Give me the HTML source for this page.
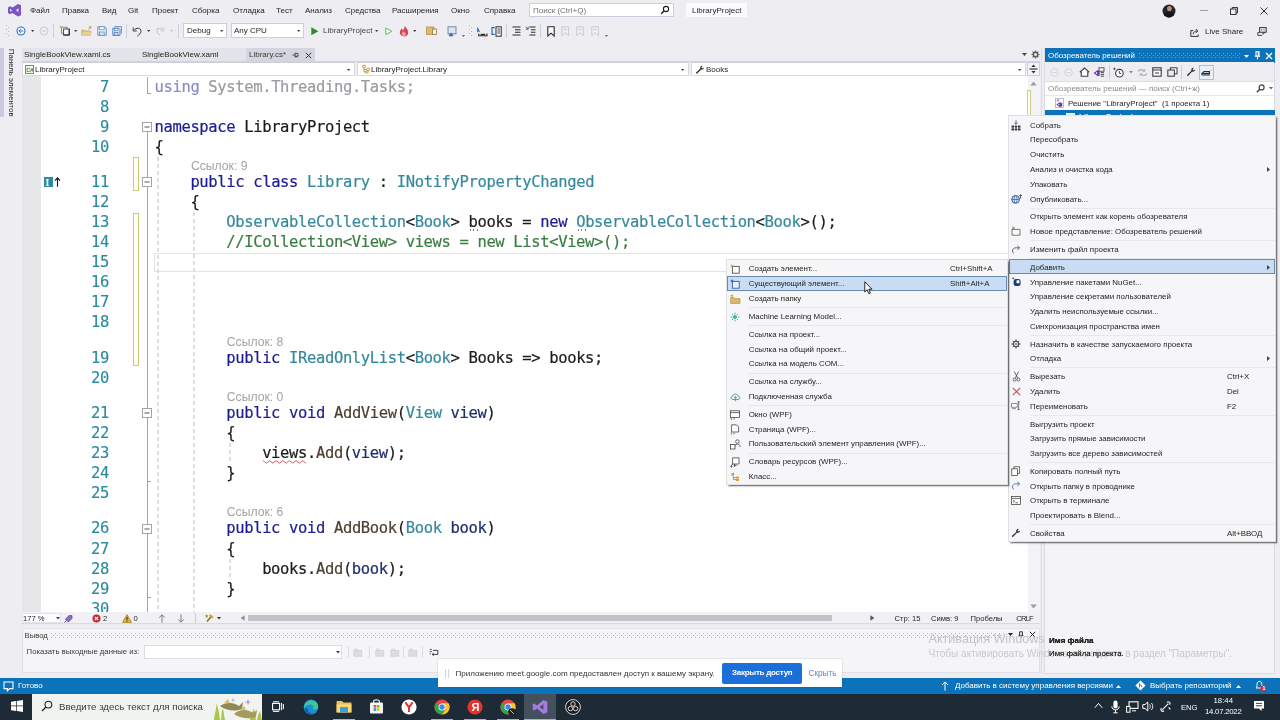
<!DOCTYPE html>
<html lang="ru"><head><meta charset="utf-8"><title>LibraryProject - Microsoft Visual Studio</title>
<style>
html,body{margin:0;padding:0}
body{width:1280px;height:720px;overflow:hidden;position:relative;background:#EEEEF2;font-family:"Liberation Sans",sans-serif;font-size:8px;color:#1E1E1E}
#root{position:absolute;left:0;top:0;width:1280px;height:720px;overflow:hidden;background:#EEEEF2;filter:blur(0.3px)}
.a{position:absolute;box-sizing:border-box}
.t{position:absolute;white-space:pre}
.c{position:absolute;white-space:pre;font-family:"DejaVu Sans Mono","Liberation Mono",monospace;font-size:15.5px;line-height:20px;color:#1b1b1b;letter-spacing:-0.361px;-webkit-text-stroke:0.2px currentColor}
.k{color:#1C1C94}.ty{color:#36899A}.cm{color:#3A7D40}.g{color:#9a9aa0}.m{color:#4C4230}.p{color:#1F2F6E}
.ln{position:absolute;white-space:pre;font-family:"DejaVu Sans Mono","Liberation Mono",monospace;font-size:15.5px;line-height:20px;color:#2B8A9E;text-align:right;width:40px;letter-spacing:-0.361px;-webkit-text-stroke:0.15px currentColor}
.cl{position:absolute;white-space:pre;font-size:12.2px;line-height:14px;color:#A3A3A3}

.gd{position:absolute;width:2px;background:repeating-linear-gradient(to bottom,#DEDEDE 0,#DEDEDE 4.4px,transparent 4.4px,transparent 7px)}

</style></head>
<body>
<div id="root">
<svg class="a" style="left:7.8px;top:4.2px;" width="13.6" height="12.5" viewBox="0 0 13.6 12.5"><path d="M10 0 L13.6 1.6 V10.9 L10 12.5 L4.5 8.9 L2 10.2 L0 9 V3.5 L2 2.3 L4.5 3.6 Z M10.4 4.3 L8 6.25 L10.4 8.2 Z M2.1 4.7 V7.8 L4.1 6.25 Z" fill="#7C56C4" fill-rule="evenodd"/></svg>
<span class="t" style="left:30px;top:4.5px;font-size:8px;line-height:12px;color:#1E1E1E;">Файл</span>
<span class="t" style="left:62px;top:4.5px;font-size:8px;line-height:12px;color:#1E1E1E;">Правка</span>
<span class="t" style="left:102px;top:4.5px;font-size:8px;line-height:12px;color:#1E1E1E;">Вид</span>
<span class="t" style="left:128px;top:4.5px;font-size:8px;line-height:12px;color:#1E1E1E;">Git</span>
<span class="t" style="left:152px;top:4.5px;font-size:8px;line-height:12px;color:#1E1E1E;">Проект</span>
<span class="t" style="left:192px;top:4.5px;font-size:8px;line-height:12px;color:#1E1E1E;">Сборка</span>
<span class="t" style="left:233px;top:4.5px;font-size:8px;line-height:12px;color:#1E1E1E;">Отладка</span>
<span class="t" style="left:276px;top:4.5px;font-size:8px;line-height:12px;color:#1E1E1E;">Тест</span>
<span class="t" style="left:305px;top:4.5px;font-size:8px;line-height:12px;color:#1E1E1E;">Анализ</span>
<span class="t" style="left:345px;top:4.5px;font-size:8px;line-height:12px;color:#1E1E1E;">Средства</span>
<span class="t" style="left:392px;top:4.5px;font-size:8px;line-height:12px;color:#1E1E1E;">Расширения</span>
<span class="t" style="left:451px;top:4.5px;font-size:8px;line-height:12px;color:#1E1E1E;">Окно</span>
<span class="t" style="left:484px;top:4.5px;font-size:8px;line-height:12px;color:#1E1E1E;">Справка</span>
<div class="a" style="left:529px;top:3px;width:145px;height:14px;background:#FFFFFF;border:1px solid #CCCEDB;"></div>
<span class="t" style="left:533px;top:4.5px;font-size:8px;line-height:12px;color:#717171;">Поиск (Ctrl+Q)</span>
<svg class="a" style="left:660px;top:5px;" width="10" height="10" viewBox="0 0 10 10"><circle cx="6" cy="4" r="2.6" fill="none" stroke="#1E1E1E" stroke-width="1.1"/><path d="M4.2 5.8 L1.2 8.8" stroke="#1E1E1E" stroke-width="1.4"/></svg>
<div class="a" style="left:686px;top:3px;width:61px;height:14px;background:#FBFBFD;"></div>
<span class="t" style="left:692px;top:4.5px;font-size:8px;line-height:12px;color:#1E1E1E;">LibraryProject</span>
<svg class="a" style="left:1162px;top:4px;" width="14" height="14" viewBox="0 0 14 14"><defs><clipPath id="av"><circle cx="7" cy="7" r="6.5"/></clipPath></defs><g clip-path="url(#av)"><rect width="14" height="14" fill="#23252B"/><ellipse cx="7.4" cy="4.6" rx="2.4" ry="2.6" fill="#B98E77"/><path d="M0 14 Q1 8 7 8.2 Q13 8 14 14 Z" fill="#15161A"/></g></svg>
<div class="a" style="left:1200px;top:10px;width:8px;height:1px;background:#A0A0A0;"></div>
<svg class="a" style="left:1229px;top:6px;" width="10" height="10" viewBox="0 0 10 10"><rect x="1.5" y="3" width="5.5" height="5.5" fill="none" stroke="#333" stroke-width="1"/><path d="M3.2 3 V1.5 H8.5 V6.8 H7" fill="none" stroke="#333" stroke-width="1"/></svg>
<svg class="a" style="left:1259px;top:6px;" width="10" height="10" viewBox="0 0 10 10"><path d="M1.5 1.5 L8.5 8.5 M8.5 1.5 L1.5 8.5" stroke="#333" stroke-width="1"/></svg>
<svg class="a" style="left:6px;top:24px;" width="4" height="14" viewBox="0 0 4 14"><g fill="#B9BAC6"><rect x="0" y="1" width="1" height="1"/><rect x="2" y="3" width="1" height="1"/><rect x="0" y="5" width="1" height="1"/><rect x="2" y="7" width="1" height="1"/><rect x="0" y="9" width="1" height="1"/><rect x="2" y="11" width="1" height="1"/></g></svg>
<svg class="a" style="left:16px;top:25.5px;" width="10" height="10" viewBox="0 0 10 10"><circle cx="5" cy="5" r="4" fill="#F4F8FD" stroke="#2F6FC2" stroke-width="1.1"/><path d="M7.3 5 H3 M4.8 3.1 L2.9 5 L4.8 6.9" fill="none" stroke="#2F6FC2" stroke-width="1"/></svg>
<svg class="a" style="left:31.099999999999998px;top:30.0px;" width="3.4" height="2" viewBox="0 0 3.4 2"><path d="M0 0 H3.4 L1.7 2 Z" fill="#444"/></svg>
<svg class="a" style="left:38.5px;top:25.5px;" width="10" height="10" viewBox="0 0 10 10"><circle cx="5" cy="5" r="4" fill="none" stroke="#C8C9D2" stroke-width="1"/><path d="M2.7 5 H7" stroke="#C8C9D2" stroke-width="1"/></svg>
<div class="a" style="left:53px;top:24px;width:1px;height:14px;background:#CCCEDB;"></div>
<svg class="a" style="left:59px;top:25px;" width="12" height="11" viewBox="0 0 12 11"><rect x="2.6" y="2.2" width="5.4" height="6" fill="#F7F7FA" stroke="#6A6A72" stroke-width="0.8"/><rect x="4.6" y="4" width="5.6" height="6" fill="#FBFBFD" stroke="#3A3A40" stroke-width="0.9"/><path d="M4.6 10 H10.2 V4" fill="none" stroke="#1E1E1E" stroke-width="1"/><path d="M1.8 0.2 L2.4 1.4 L3.6 1.8 L2.4 2.3 L1.8 3.6 L1.2 2.3 L0 1.8 L1.2 1.4 Z" fill="#D9B24A"/></svg>
<svg class="a" style="left:74.3px;top:30.0px;" width="3.4" height="2" viewBox="0 0 3.4 2"><path d="M0 0 H3.4 L1.7 2 Z" fill="#444"/></svg>
<svg class="a" style="left:80.5px;top:25.5px;" width="12" height="10" viewBox="0 0 12 10"><path d="M0.6 4 H3.6 L4.6 5 H9.6 V9.2 H0.6 Z" fill="#DCC27E" stroke="#C2A55C" stroke-width="0.6"/><path d="M0.6 9.2 L2.2 6 H11 L9.6 9.2 Z" fill="#E6D093"/><path d="M7.2 3.4 L9.8 0.8 M9.8 0.8 H8 M9.8 0.8 V2.6" stroke="#B09045" stroke-width="0.9" fill="none"/></svg>
<svg class="a" style="left:96.5px;top:25.5px;" width="10" height="10" viewBox="0 0 10 10"><path d="M0.8 0.8 H7.8 L9.2 2.2 V9.2 H0.8 Z" fill="#EEF3FA" stroke="#5B86BC" stroke-width="0.9"/><rect x="2.6" y="0.8" width="4.6" height="3" fill="#FBFCFE" stroke="#5B86BC" stroke-width="0.7"/><rect x="2.6" y="6" width="4.6" height="3.2" fill="#DCE7F5" stroke="#5B86BC" stroke-width="0.7"/></svg>
<svg class="a" style="left:111.5px;top:25.5px;" width="10" height="10" viewBox="0 0 10 10"><path d="M2.4 0.6 H9.4 V7.4" fill="none" stroke="#5B86BC" stroke-width="0.9"/><path d="M0.8 2.2 H6.8 L8 3.4 V9.4 H0.8 Z" fill="#E4ECF7" stroke="#4E79B0" stroke-width="0.9"/><rect x="2.4" y="2.4" width="3.6" height="2.4" fill="#FBFCFE" stroke="#4E79B0" stroke-width="0.7"/><rect x="2.4" y="6.6" width="3.6" height="2.8" fill="#CCDAEE" stroke="#4E79B0" stroke-width="0.7"/></svg>
<div class="a" style="left:126px;top:24px;width:1px;height:14px;background:#CCCEDB;"></div>
<svg class="a" style="left:131.5px;top:25.5px;" width="11" height="11" viewBox="0 0 11 11"><path d="M1.8 4.4 C4 1.2 9.4 1.6 9 5.4 C8.8 7.4 7.2 8.6 5.4 10" fill="none" stroke="#333" stroke-width="1"/><path d="M1.2 1.4 V5 H4.8" fill="none" stroke="#333" stroke-width="0.9"/></svg>
<svg class="a" style="left:146.8px;top:30.0px;" width="3.4" height="2" viewBox="0 0 3.4 2"><path d="M0 0 H3.4 L1.7 2 Z" fill="#444"/></svg>
<svg class="a" style="left:155px;top:25.5px;" width="10" height="10" viewBox="0 0 10 10"><path d="M8.4 4.2 C6.4 1.4 1.6 1.8 2 5.2 C2.2 6.8 3.4 7.8 4.8 9" fill="none" stroke="#C9CAD3" stroke-width="1.1"/><path d="M9 1.2 V4.8 H5.4" fill="none" stroke="#C9CAD3" stroke-width="1"/></svg>
<svg class="a" style="left:170.3px;top:30.0px;" width="3.4" height="2" viewBox="0 0 3.4 2"><path d="M0 0 H3.4 L1.7 2 Z" fill="#C4C5CD"/></svg>
<div class="a" style="left:178px;top:24px;width:1px;height:14px;background:#CCCEDB;"></div>
<div class="a" style="left:183px;top:23px;width:44px;height:15px;background:#FFFFFF;border:1px solid #CCCEDB;"></div>
<span class="t" style="left:187px;top:24.5px;font-size:8px;line-height:12px;color:#1E1E1E;">Debug</span>
<svg class="a" style="left:220.3px;top:30.0px;" width="3.4" height="2" viewBox="0 0 3.4 2"><path d="M0 0 H3.4 L1.7 2 Z" fill="#444"/></svg>
<div class="a" style="left:231px;top:23px;width:73px;height:15px;background:#FFFFFF;border:1px solid #CCCEDB;"></div>
<span class="t" style="left:234px;top:24.5px;font-size:8px;line-height:12px;color:#1E1E1E;">Any CPU</span>
<svg class="a" style="left:297.3px;top:30.0px;" width="3.4" height="2" viewBox="0 0 3.4 2"><path d="M0 0 H3.4 L1.7 2 Z" fill="#444"/></svg>
<svg class="a" style="left:310.5px;top:26.5px;" width="8" height="9" viewBox="0 0 8 9"><path d="M0.3 0.3 L7.4 4.3 L0.3 8.3 Z" fill="#2E8B2E"/></svg>
<span class="t" style="left:323px;top:24.5px;font-size:8px;line-height:12px;color:#444;">LibraryProject</span>
<svg class="a" style="left:375.3px;top:30.0px;" width="3.4" height="2" viewBox="0 0 3.4 2"><path d="M0 0 H3.4 L1.7 2 Z" fill="#444"/></svg>
<svg class="a" style="left:384.5px;top:26.5px;" width="8" height="9" viewBox="0 0 8 9"><path d="M0.8 0.9 L6.8 4.3 L0.8 7.7 Z" fill="#F4FBF2" stroke="#6DB56A" stroke-width="1"/></svg>
<svg class="a" style="left:399px;top:25px;" width="10" height="12" viewBox="0 0 10 12"><path d="M5.6 0.6 C6.4 2.8 9.2 4.2 9.2 7.4 C9.2 9.8 7.4 11.4 5 11.4 C2.6 11.4 0.8 9.8 0.8 7.6 C0.8 5.6 2.2 4.8 2.6 3.2 C3.6 4 3.8 5 3.8 5.6 C5 4.6 5.8 2.6 5.6 0.6 Z" fill="#D8435A"/><path d="M5 11 C3.6 11 2.8 10 2.8 8.8 C2.8 7.6 3.8 7.2 4.2 6.2 C5.4 7 6.8 7.8 6.8 9.2 C6.8 10.2 6 11 5 11 Z" fill="#F39CA7"/></svg>
<svg class="a" style="left:412.8px;top:30.0px;" width="3.4" height="2" viewBox="0 0 3.4 2"><path d="M0 0 H3.4 L1.7 2 Z" fill="#444"/></svg>
<svg class="a" style="left:426px;top:25.5px;" width="11" height="10" viewBox="0 0 11 10"><rect x="0.5" y="1" width="7.5" height="7.5" fill="#DDB871" stroke="#B8924A" stroke-width="0.8"/><rect x="6.5" y="3" width="4" height="5.5" fill="#F6F0E0" stroke="#8A7A55" stroke-width="0.8"/></svg>
<svg class="a" style="left:446.5px;top:25.5px;" width="10" height="11" viewBox="0 0 10 11"><rect x="1" y="0.8" width="8" height="7" fill="#DCE6F2" stroke="#6A7C96" stroke-width="0.9"/><path d="M1.4 10 L4 6.6 L6.6 10 Z" fill="#3D73B9"/><rect x="2.6" y="8.4" width="2.8" height="2" fill="#3D73B9"/></svg>
<svg class="a" style="left:461.5px;top:34.5px;" width="3" height="2" viewBox="0 0 3 2"><path d="M0 0 H3 L1.5 2 Z" fill="#666"/></svg>
<svg class="a" style="left:469px;top:24px;" width="4" height="14" viewBox="0 0 4 14"><g fill="#B9BAC6"><rect x="0" y="1" width="1" height="1"/><rect x="2" y="3" width="1" height="1"/><rect x="0" y="5" width="1" height="1"/><rect x="2" y="7" width="1" height="1"/><rect x="0" y="9" width="1" height="1"/><rect x="2" y="11" width="1" height="1"/></g></svg>
<svg class="a" style="left:476px;top:25.5px;" width="12" height="11" viewBox="0 0 12 11"><path d="M1.2 0.6 V6.6 L2.8 5.2 L4.4 6.4 Z" fill="#1F5FB4"/><path d="M2.8 7.4 V9.8 H11 V7.4" fill="none" stroke="#2B2B2B" stroke-width="1.1"/><rect x="4.6" y="7.8" width="4.6" height="1.6" fill="#2B2B2B"/></svg>
<svg class="a" style="left:491px;top:25.5px;" width="11" height="11" viewBox="0 0 11 11"><path d="M3.6 1.6 H1 V8.4 H3.6" fill="none" stroke="#1F5FB4" stroke-width="1.1"/><rect x="5" y="0.8" width="5.2" height="9.4" fill="#fff" stroke="#2B2B2B" stroke-width="1"/><path d="M6.4 3 H9 M6.4 5 H9 M6.4 7 H9" stroke="#2B2B2B" stroke-width="0.9"/></svg>
<div class="a" style="left:505.5px;top:24px;width:1px;height:14px;background:#CCCEDB;"></div>
<svg class="a" style="left:512px;top:26px;" width="9" height="10" viewBox="0 0 9 10"><path d="M0.5 1 H8.5 M3 3.7 H8.5 M3 6.3 H8.5 M0.5 9 H8.5" stroke="#2B2B2B" stroke-width="1.1"/></svg>
<svg class="a" style="left:524.5px;top:26px;" width="11" height="10" viewBox="0 0 11 10"><path d="M4.4 1 H10.5 M6 3.7 H10.5 M6 6.3 H10.5 M4.4 9 H10.5" stroke="#2B2B2B" stroke-width="1.1"/><path d="M0.6 0.8 L3.2 3.2 M0.8 3.2 H3.2 V0.9" stroke="#1F5FB4" stroke-width="0.9" fill="none"/></svg>
<div class="a" style="left:540px;top:24px;width:1px;height:14px;background:#CCCEDB;"></div>
<svg class="a" style="left:546.5px;top:25.5px;" width="8" height="11" viewBox="0 0 8 11"><path d="M0.8 0.8 H7.2 V10 L4 7.2 L0.8 10 Z" fill="#FCFCFD" stroke="#2B2B2B" stroke-width="1.1"/></svg>
<svg class="a" style="left:560.5px;top:25.5px;" width="9" height="11" viewBox="0 0 9 11"><path d="M0.8 0.8 H7.6 V9.6 L4.2 7 L0.8 9.6 Z" fill="none" stroke="#C9CAD3" stroke-width="1"/><path d="M2.4 3.4 H6" stroke="#C9CAD3" stroke-width="0.9"/></svg>
<svg class="a" style="left:576px;top:25.5px;" width="9" height="11" viewBox="0 0 9 11"><path d="M0.8 0.8 H7.6 V9.6 L4.2 7 L0.8 9.6 Z" fill="none" stroke="#C9CAD3" stroke-width="1"/><path d="M2.4 3.4 H6" stroke="#C9CAD3" stroke-width="0.9"/></svg>
<svg class="a" style="left:590.5px;top:25.5px;" width="9" height="11" viewBox="0 0 9 11"><path d="M0.8 0.8 H7.6 V9.6 L4.2 7 L0.8 9.6 Z" fill="none" stroke="#C9CAD3" stroke-width="1"/><path d="M2.4 3.4 H6" stroke="#C9CAD3" stroke-width="0.9"/></svg>
<svg class="a" style="left:605.0px;top:34.5px;" width="3" height="2" viewBox="0 0 3 2"><path d="M0 0 H3 L1.5 2 Z" fill="#666"/></svg>
<svg class="a" style="left:1190px;top:28px;" width="10" height="9" viewBox="0 0 10 9"><path d="M3.2 2.6 H0.8 V8.4 H8.2 V6.4" fill="none" stroke="#333" stroke-width="1"/><path d="M3 6.2 C3.4 4 5 3 7.2 3 M5.8 1 L7.8 3 L5.8 5" fill="none" stroke="#333" stroke-width="1"/></svg>
<span class="t" style="left:1205px;top:26px;font-size:8px;line-height:12px;color:#1E1E1E;">Live Share</span>
<svg class="a" style="left:1257px;top:27px;" width="10" height="9" viewBox="0 0 10 9"><path d="M2.6 5.6 H0.8 V8.4 H5" fill="none" stroke="#333" stroke-width="0.9"/><rect x="2.6" y="0.6" width="6.6" height="4.6" fill="none" stroke="#333" stroke-width="1"/><path d="M6 5.2 V7.4 L8 5.2" fill="none" stroke="#333" stroke-width="0.9"/><circle cx="4.6" cy="2.8" r="0.6" fill="#333"/><circle cx="7" cy="2.8" r="0.6" fill="#333"/></svg>
<div class="a" style="left:0px;top:48px;width:3.5px;height:68.5px;background:#CBC8E0;"></div>
<span class="t" style="left:7px;top:49px;font-size:7.8px;line-height:9px;color:#1E1E1E;transform-origin:0 0;transform:translate(9.3px,0) rotate(90deg);">Панель элементов</span>
<div class="a" style="left:22px;top:48px;width:224px;height:13.5px;background:#E3E4E9;"></div>
<div class="a" style="left:245.5px;top:48px;width:69.5px;height:13.5px;background:#D4D5DD;"></div>
<div class="a" style="left:22px;top:61px;width:1018px;height:1px;background:#D2D3DC;"></div>
<span class="t" style="left:24px;top:48.5px;font-size:8px;line-height:12px;color:#1E1E1E;">SingleBookView.xaml.cs</span>
<span class="t" style="left:142px;top:48.5px;font-size:8px;line-height:12px;color:#1E1E1E;">SingleBookView.xaml</span>
<span class="t" style="left:249px;top:48.5px;font-size:8px;line-height:12px;color:#3A3A3A;">Library.cs*</span>
<svg class="a" style="left:292px;top:51.5px;" width="7" height="6" viewBox="0 0 7 6"><path d="M0.4 3 H3 M3 0.8 V5.2 M3 1.4 H6 V4.2 H3 M3 4.8 H6" fill="none" stroke="#444" stroke-width="0.9"/></svg>
<svg class="a" style="left:304.5px;top:51.5px;" width="7" height="7" viewBox="0 0 7 7"><path d="M0.8 0.8 L6.2 6.2 M6.2 0.8 L0.8 6.2" stroke="#333" stroke-width="1"/></svg>
<svg class="a" style="left:1021.5px;top:53.0px;" width="5" height="3" viewBox="0 0 5 3"><path d="M0 0 H5 L2.5 3 Z" fill="#444"/></svg>
<svg class="a" style="left:1030.5px;top:49.5px;" width="9" height="9" viewBox="0 0 9 9"><circle cx="4.5" cy="4.5" r="2.2" fill="none" stroke="#555" stroke-width="1.4"/><g stroke="#555" stroke-width="1.2"><path d="M4.5 0.4 V1.8 M4.5 7.2 V8.6 M0.4 4.5 H1.8 M7.2 4.5 H8.6 M1.6 1.6 L2.6 2.6 M6.4 6.4 L7.4 7.4 M1.6 7.4 L2.6 6.4 M6.4 2.6 L7.4 1.6"/></g></svg>
<div class="a" style="left:22px;top:62px;width:1018px;height:14px;background:#EEEEF2;"></div>
<div class="a" style="left:22px;top:62px;width:333px;height:14px;background:#FFFFFF;border:1px solid #D6D8E2;border-top-color:#CCCEDB;"></div>
<svg class="a" style="left:347.3px;top:68.8px;" width="3.4" height="2" viewBox="0 0 3.4 2"><path d="M0 0 H3.4 L1.7 2 Z" fill="#444"/></svg>
<div class="a" style="left:357px;top:62px;width:332px;height:14px;background:#FFFFFF;border:1px solid #D6D8E2;border-top-color:#CCCEDB;"></div>
<svg class="a" style="left:681.3px;top:68.8px;" width="3.4" height="2" viewBox="0 0 3.4 2"><path d="M0 0 H3.4 L1.7 2 Z" fill="#444"/></svg>
<div class="a" style="left:691px;top:62px;width:335px;height:14px;background:#FFFFFF;border:1px solid #D6D8E2;border-top-color:#CCCEDB;"></div>
<svg class="a" style="left:1018.3px;top:68.8px;" width="3.4" height="2" viewBox="0 0 3.4 2"><path d="M0 0 H3.4 L1.7 2 Z" fill="#444"/></svg>
<svg class="a" style="left:25px;top:64.5px;" width="9" height="9" viewBox="0 0 9 9"><rect x="0.5" y="0.5" width="8" height="8" fill="#F4FAF0" stroke="#5E8F4C" stroke-width="0.9"/><text x="1.2" y="6.8" font-family="Liberation Sans,sans-serif" font-size="5.6" font-weight="bold" fill="#3E7A2E">C#</text></svg>
<span class="t" style="left:35px;top:63.5px;font-size:8px;line-height:12px;color:#1E1E1E;">LibraryProject</span>
<svg class="a" style="left:359.5px;top:64px;" width="11" height="10" viewBox="0 0 11 10"><path d="M2 2.4 L4 0.8 L6 2.4 L4 4 Z" fill="#F6E7B6" stroke="#B98D26" stroke-width="0.8"/><path d="M6 5.4 L8 3.8 L10 5.4 L8 7 Z M5 8 L7 6.6 L8.6 8 L7 9.4 Z" fill="#F6E7B6" stroke="#B98D26" stroke-width="0.8"/><path d="M4 4 V8 H5 M4 5.4 H6" fill="none" stroke="#777" stroke-width="0.7"/></svg>
<span class="t" style="left:371px;top:63.5px;font-size:8px;line-height:12px;color:#1E1E1E;">LibraryProject.Library</span>
<svg class="a" style="left:695px;top:64.5px;" width="10" height="10" viewBox="0 0 10 10"><path d="M9 2.6 C9 4.2 7.4 5 6.2 4.5 L2.2 8.6 C1.6 9.2 0.6 8.3 1.2 7.6 L5.3 3.6 C4.8 2.2 6 0.6 7.6 0.9 L6.4 2.2 L6.9 3 L7.8 3.4 Z" fill="#2B2B2B"/></svg>
<span class="t" style="left:706px;top:63.5px;font-size:8px;line-height:12px;color:#1E1E1E;">Books</span>
<div class="a" style="left:1027px;top:62px;width:13px;height:14px;background:#F4F4F7;border:1px solid #CCCEDB;"></div>
<svg class="a" style="left:1029px;top:64px;" width="9" height="10" viewBox="0 0 9 10"><path d="M0.5 5 H8.5" stroke="#333" stroke-width="1.2"/><path d="M4.5 0.6 L6.6 3 H2.4 Z M4.5 9.4 L6.6 7 H2.4 Z" fill="#333"/></svg>
<div class="a" style="left:22px;top:76px;width:1018px;height:536px;background:#FFFFFF;"></div>
<div class="a" style="left:22px;top:76px;width:19px;height:536px;background:#E6E7E8;"></div>
<div class="a" style="left:1027.5px;top:76px;width:12.5px;height:536px;background:#F3F3F6;"></div>
<svg class="a" style="left:1030px;top:81px;" width="7" height="5" viewBox="0 0 7 5"><path d="M0.3 4.6 L3.5 0.6 L6.7 4.6 Z" fill="#9C9DA6"/></svg>
<svg class="a" style="left:1030px;top:603.5px;" width="7" height="5" viewBox="0 0 7 5"><path d="M0.3 0.4 L3.5 4.4 L6.7 0.4 Z" fill="#9C9DA6"/></svg>
<div class="a" style="left:1027px;top:90px;width:4px;height:150px;background:#FFFFF2;border:1px solid #CFCF86;"></div>
<div class="a" style="left:154px;top:252.5px;width:872px;height:19px;border:1px solid #E3E3E6;border-right:none;"></div>
<div class="gd" style="left:157.3px;top:156.9px;height:455.1px;"></div>
<div class="gd" style="left:193.3px;top:212.1px;height:399.9px;"></div>
<div class="gd" style="left:229.3px;top:443.1px;height:20.1px;"></div>
<div class="gd" style="left:229.3px;top:558.6px;height:20.1px;"></div>
<div class="a" style="left:147px;top:76.5px;width:1px;height:16.08px;background:#A5A5A5;"></div>
<div class="a" style="left:147px;top:92.58px;width:4px;height:1px;background:#A5A5A5;"></div>
<div class="a" style="left:147px;top:131.66px;width:1px;height:480.34000000000003px;background:#A5A5A5;"></div>
<div class="a" style="left:147px;top:481.23999999999984px;width:4px;height:1px;background:#A5A5A5;"></div>
<div class="a" style="left:147px;top:596.74px;width:4px;height:1px;background:#A5A5A5;"></div>
<svg class="a" style="left:142px;top:122px;" width="10" height="10" viewBox="0 0 10 10"><rect x="0.5" y="0.5" width="9" height="9" fill="#fff" stroke="#A5A5A5"/><path d="M2.5 5 H7.5" stroke="#555" stroke-width="1"/></svg>
<svg class="a" style="left:142px;top:177px;" width="10" height="10" viewBox="0 0 10 10"><rect x="0.5" y="0.5" width="9" height="9" fill="#fff" stroke="#A5A5A5"/><path d="M2.5 5 H7.5" stroke="#555" stroke-width="1"/></svg>
<svg class="a" style="left:142px;top:408px;" width="10" height="10" viewBox="0 0 10 10"><rect x="0.5" y="0.5" width="9" height="9" fill="#fff" stroke="#A5A5A5"/><path d="M2.5 5 H7.5" stroke="#555" stroke-width="1"/></svg>
<svg class="a" style="left:142px;top:524px;" width="10" height="10" viewBox="0 0 10 10"><rect x="0.5" y="0.5" width="9" height="9" fill="#fff" stroke="#A5A5A5"/><path d="M2.5 5 H7.5" stroke="#555" stroke-width="1"/></svg>
<div class="a" style="left:133px;top:157.42px;width:6px;height:33.58000000000001px;background:#FFFFF4;border:1px solid #C9C978;"></div>
<div class="a" style="left:133px;top:212.57999999999998px;width:6px;height:153.6599999999999px;background:#FFFFF4;border:1px solid #C9C978;"></div>
<span class="ln" style="left:69px;top:76.50px;">7</span>
<span class="ln" style="left:69px;top:96.58px;">8</span>
<span class="ln" style="left:69px;top:116.66px;">9</span>
<span class="ln" style="left:69px;top:136.74px;">10</span>
<span class="ln" style="left:69px;top:171.92px;">11</span>
<span class="ln" style="left:69px;top:192.00px;">12</span>
<span class="ln" style="left:69px;top:212.08px;">13</span>
<span class="ln" style="left:69px;top:232.16px;">14</span>
<span class="ln" style="left:69px;top:252.24px;">15</span>
<span class="ln" style="left:69px;top:272.32px;">16</span>
<span class="ln" style="left:69px;top:292.40px;">17</span>
<span class="ln" style="left:69px;top:312.48px;">18</span>
<span class="ln" style="left:69px;top:347.66px;">19</span>
<span class="ln" style="left:69px;top:367.74px;">20</span>
<span class="ln" style="left:69px;top:402.92px;">21</span>
<span class="ln" style="left:69px;top:423.00px;">22</span>
<span class="ln" style="left:69px;top:443.08px;">23</span>
<span class="ln" style="left:69px;top:463.16px;">24</span>
<span class="ln" style="left:69px;top:483.24px;">25</span>
<span class="ln" style="left:69px;top:518.42px;">26</span>
<span class="ln" style="left:69px;top:538.50px;">27</span>
<span class="ln" style="left:69px;top:558.58px;">28</span>
<span class="ln" style="left:69px;top:578.66px;">29</span>
<span class="ln" style="left:69px;top:598.74px;">30</span>
<span class="c" style="left:154.50px;top:76.50px;"><span style="color:#8C8CC8">using</span> <span class="g">System.Threading.Tasks;</span></span>
<span class="c" style="left:154.50px;top:116.66px;"><span class="k">namespace</span> LibraryProject</span>
<span class="c" style="left:154.50px;top:136.74px;">{</span>
<span class="c" style="left:190.38px;top:171.92px;"><span class="k">public</span> <span class="k">class</span> <span class="ty">Library</span> : <span class="ty">INotifyPropertyChanged</span></span>
<span class="c" style="left:190.38px;top:192.00px;">{</span>
<span class="c" style="left:226.26px;top:212.08px;"><span class="ty">ObservableCollection</span>&lt;<span class="ty">Book</span>&gt; books = <span class="k">new</span> <span class="ty">ObservableCollection</span>&lt;<span class="ty">Book</span>&gt;();</span>
<span class="c" style="left:226.26px;top:232.16px;"><span class="cm">//ICollection&lt;View&gt; views = new List&lt;View&gt;();</span></span>
<span class="c" style="left:226.26px;top:347.66px;"><span class="k">public</span> <span class="ty">IReadOnlyList</span>&lt;<span class="ty">Book</span>&gt; Books =&gt; books;</span>
<span class="c" style="left:226.26px;top:402.92px;"><span class="k">public</span> <span class="k">void</span> <span class="m">AddView</span>(<span class="ty">View</span> <span class="p">view</span>)</span>
<span class="c" style="left:226.26px;top:423.00px;">{</span>
<span class="c" style="left:262.14px;top:443.08px;">views.<span class="m">Add</span>(<span class="p">view</span>);</span>
<span class="c" style="left:226.26px;top:463.16px;">}</span>
<span class="c" style="left:226.26px;top:518.42px;"><span class="k">public</span> <span class="k">void</span> <span class="m">AddBook</span>(<span class="ty">Book</span> <span class="p">book</span>)</span>
<span class="c" style="left:226.26px;top:538.50px;">{</span>
<span class="c" style="left:262.14px;top:558.58px;">books.<span class="m">Add</span>(<span class="p">book</span>);</span>
<span class="c" style="left:226.26px;top:578.66px;">}</span>
<span class="cl" style="left:190.88px;top:158.92px;">Ссылок: 9</span>
<span class="cl" style="left:226.76px;top:334.66px;">Ссылок: 8</span>
<span class="cl" style="left:226.76px;top:389.92px;">Ссылок: 0</span>
<span class="cl" style="left:226.76px;top:505.42px;">Ссылок: 6</span>
<svg class="a" style="left:263px;top:459.5px;" width="44" height="4" viewBox="0 0 44 4"><path d="M0.00 0.6 L3.30 3.2 L6.60 0.6 L9.90 3.2 L13.20 0.6 L16.50 3.2 L19.80 0.6 L23.10 3.2 L26.40 0.6 L29.70 3.2 L33.00 0.6 L36.30 3.2 L39.60 0.6 L42.90 3.2" fill="none" stroke="#D2555F" stroke-width="0.95" stroke-linejoin="round"/></svg>
<div class="a" style="left:469.5px;top:229.38px;width:1.4px;height:1.4px;background:#7E7E7E;"></div>
<div class="a" style="left:473.1px;top:229.38px;width:1.4px;height:1.4px;background:#7E7E7E;"></div>
<div class="a" style="left:476.7px;top:229.38px;width:1.4px;height:1.4px;background:#7E7E7E;"></div>
<div class="a" style="left:577.5px;top:229.38px;width:1.4px;height:1.4px;background:#7E7E7E;"></div>
<div class="a" style="left:581.1px;top:229.38px;width:1.4px;height:1.4px;background:#7E7E7E;"></div>
<div class="a" style="left:584.7px;top:229.38px;width:1.4px;height:1.4px;background:#7E7E7E;"></div>
<div class="a" style="left:44px;top:177px;width:9px;height:10px;background:#2B8A9E;"></div>
<span class="t" style="left:45.5px;top:176.5px;font-family:'Liberation Serif',serif;font-weight:bold;font-size:10px;line-height:11px;color:#fff;">I</span>
<svg class="a" style="left:54px;top:177px;" width="7" height="10" viewBox="0 0 7 10"><path d="M3.5 9.8 V1 M1 3.6 L3.5 0.8 L6 3.6" fill="none" stroke="#111" stroke-width="1.1"/></svg>
<div class="a" style="left:22px;top:612px;width:1018px;height:12px;background:#EEEEF2;"></div>
<div class="a" style="left:1041px;top:48px;width:1px;height:626px;background:#DCDDE4;"></div>
<div class="a" style="left:1044px;top:48px;width:231px;height:626px;background:#F4F4F6;border:1px solid #DADBE2;"></div>
<div class="a" style="left:1044.5px;top:48.4px;width:230.5px;height:14.4px;background:#0C72B9;"></div>
<span class="t" style="left:1048px;top:50.2px;font-size:7.9px;line-height:12px;color:#FFFFFF;">Обозреватель решений</span>
<svg class="a" style="left:1139px;top:53px;" width="101" height="6" viewBox="0 0 101 6"><defs><pattern id="dg" width="4" height="4" patternUnits="userSpaceOnUse"><rect x="0" y="0" width="1" height="1" fill="#5FA4DA"/><rect x="2" y="2" width="1" height="1" fill="#5FA4DA"/></pattern></defs><rect width="101" height="6" fill="url(#dg)"/></svg>
<svg class="a" style="left:1243.5px;top:54.5px;" width="5" height="3" viewBox="0 0 5 3"><path d="M0 0 H5 L2.5 3 Z" fill="#FFFFFF"/></svg>
<svg class="a" style="left:1253.5px;top:51px;" width="7" height="9" viewBox="0 0 7 9"><path d="M2 0.8 H5 V5 H2 Z M0.8 5.2 H6.2 M3.5 5.2 V8.6" fill="none" stroke="#fff" stroke-width="1.1"/><path d="M4.4 0.8 V5" stroke="#fff" stroke-width="1.2"/></svg>
<svg class="a" style="left:1264.5px;top:52px;" width="8" height="8" viewBox="0 0 8 8"><path d="M1 1 L7 7 M7 1 L1 7" stroke="#fff" stroke-width="1.3"/></svg>
<div class="a" style="left:1045px;top:62px;width:229px;height:19px;background:#EEEEF2;"></div>
<svg class="a" style="left:1049.5px;top:67.5px;" width="9" height="9" viewBox="0 0 9 9"><circle cx="4.5" cy="4.5" r="3.8" fill="none" stroke="#D2D3DB" stroke-width="1"/><path d="M2.4 4.5 H6.6" stroke="#D2D3DB" stroke-width="1"/></svg>
<svg class="a" style="left:1064px;top:67.5px;" width="9" height="9" viewBox="0 0 9 9"><circle cx="4.5" cy="4.5" r="3.8" fill="none" stroke="#D2D3DB" stroke-width="1"/><path d="M2.4 4.5 H6.6" stroke="#D2D3DB" stroke-width="1"/></svg>
<svg class="a" style="left:1078.5px;top:67px;" width="11" height="10" viewBox="0 0 11 10"><path d="M0.8 5.2 L5.5 1 L10.2 5.2 M2.2 4.4 V9.2 H8.8 V4.4" fill="#fff" stroke="#3B3B3B" stroke-width="1.1"/></svg>
<svg class="a" style="left:1092.5px;top:66.5px;" width="12" height="11" viewBox="0 0 12 11"><path d="M0.6 6 L4.2 3.4 V4.8 L2.4 6 L4.2 7.4 V8.8 Z M4.2 3 L6.6 4 V8.4 L4.2 9.2 Z" fill="#6A2FB0"/><rect x="6" y="0.8" width="5" height="3.4" fill="#fff" stroke="#444" stroke-width="0.9"/><path d="M7.6 5.6 H11 M7.6 7.4 H11 M7.6 9.2 H11" stroke="#444" stroke-width="0.9"/></svg>
<div class="a" style="left:1108.5px;top:65px;width:1px;height:14px;background:#CCCEDB;"></div>
<svg class="a" style="left:1113px;top:66.5px;" width="12" height="11" viewBox="0 0 12 11"><circle cx="6.4" cy="6.2" r="3.8" fill="#fff" stroke="#3B3B3B" stroke-width="1.1"/><path d="M6.4 4 V6.4 H8.2" fill="none" stroke="#3B3B3B" stroke-width="0.9"/><path d="M1.4 0.6 V3 M0.2 1.8 H2.6" stroke="#3B3B3B" stroke-width="0.8"/></svg>
<svg class="a" style="left:1128.5px;top:71.25px;" width="4" height="2.5" viewBox="0 0 4 2.5"><path d="M0 0 H4 L2.0 2.5 Z" fill="#888"/></svg>
<svg class="a" style="left:1136.5px;top:68px;" width="11" height="9" viewBox="0 0 11 9"><path d="M1 3.4 C2.6 1 6 1 7.4 3 M10 5.6 C8.4 8 5 8 3.6 6" fill="none" stroke="#A9AAB3" stroke-width="1.2"/><path d="M7.8 1 V3.4 H5.6 M3.2 8 V5.6 H5.4" fill="none" stroke="#A9AAB3" stroke-width="0.9"/></svg>
<svg class="a" style="left:1151.5px;top:67px;" width="10" height="10" viewBox="0 0 10 10"><rect x="0.8" y="0.8" width="8.4" height="8.4" fill="#fff" stroke="#3B3B3B" stroke-width="1.1"/><path d="M0.8 3 H9.2 M3 6 H7" stroke="#3B3B3B" stroke-width="1"/></svg>
<svg class="a" style="left:1166.5px;top:67px;" width="11" height="10" viewBox="0 0 11 10"><rect x="3.4" y="0.8" width="6.6" height="6" fill="#fff" stroke="#3B3B3B" stroke-width="1"/><rect x="0.8" y="3" width="6.6" height="6.2" fill="#E9E9EE" stroke="#3B3B3B" stroke-width="1"/></svg>
<div class="a" style="left:1181px;top:65px;width:1px;height:14px;background:#CCCEDB;"></div>
<svg class="a" style="left:1186px;top:67px;" width="10" height="10" viewBox="0 0 10 10"><path d="M9.2 2.6 C9.2 4.3 7.5 5.2 6.2 4.6 L2.2 8.8 C1.5 9.5 0.5 8.5 1.2 7.8 L5.4 3.8 C4.8 2.3 6 0.6 7.8 0.9 L6.5 2.2 L7 3.1 L7.9 3.5 Z" fill="#2B2B2B"/></svg>
<div class="a" style="left:1198.5px;top:64.5px;width:15.5px;height:15.5px;background:#E6F0FA;border:1px solid #9CC4E6;"></div>
<svg class="a" style="left:1201px;top:68px;" width="11" height="8" viewBox="0 0 11 8"><path d="M1 5.6 H8.4 V3.6 H3 Z" fill="#fff" stroke="#2B2B2B" stroke-width="1.1"/><path d="M0.6 7 H9" stroke="#2B2B2B" stroke-width="1"/><path d="M9.4 2.6 L10.6 1.4" stroke="#C9A227" stroke-width="0.9"/></svg>
<div class="a" style="left:1045px;top:81px;width:229px;height:14.5px;background:#FFFFFF;border-top:1px solid #DCDDE4;border-bottom:1px solid #E6E7EC;"></div>
<span class="t" style="left:1048px;top:82.5px;font-size:8px;line-height:12px;color:#8A8A8A;letter-spacing:0.02px;">Обозреватель решений — поиск (Ctrl+ж)</span>
<svg class="a" style="left:1256px;top:84px;" width="9" height="9" viewBox="0 0 9 9"><circle cx="5.6" cy="3.4" r="2.5" fill="none" stroke="#444" stroke-width="1.2"/><path d="M3.8 5.2 L0.8 8.2" stroke="#444" stroke-width="1.5"/></svg>
<svg class="a" style="left:1268.5px;top:87.25px;" width="4" height="2.5" viewBox="0 0 4 2.5"><path d="M0 0 H4 L2.0 2.5 Z" fill="#666"/></svg>
<div class="a" style="left:1045px;top:95.5px;width:229px;height:20px;background:#FFFFFF;"></div>
<svg class="a" style="left:1055px;top:98px;" width="9" height="10" viewBox="0 0 9 10"><rect x="0.6" y="0.6" width="7.8" height="8.8" fill="#fff" stroke="#A0A0A8" stroke-width="0.7"/><path d="M1.4 6.6 L4.4 4.4 V5.6 L3 6.6 L4.4 7.6 V8.8 Z M4.4 4.2 L7.2 5 V8.4 L4.4 9 Z" fill="#6A2FB0"/><path d="M2 1.4 L4 3.4 M4 1.4 L2 3.4" stroke="#6A2FB0" stroke-width="0.8"/></svg>
<span class="t" style="left:1068px;top:97.6px;font-size:7.9px;line-height:12px;color:#1E1E1E;">Решение "LibraryProject"  (1 проекта 1)</span>
<div class="a" style="left:1045px;top:109.5px;width:230px;height:14.5px;background:#0C72B9;overflow:hidden;"><span class="t" style="left:34px;top:1.5px;font-size:8px;line-height:12px;color:#fff;font-weight:bold;">LibraryProject</span><svg class="a" style="left:9px;top:5px" width="5" height="5" viewBox="0 0 5 5"><path d="M5 0 V5 H0 Z" fill="#fff"/></svg><svg class="a" style="left:21px;top:3px" width="9" height="9" viewBox="0 0 9 9"><rect x="0.5" y="0.5" width="8" height="8" fill="#E9F4E4" stroke="#fff" stroke-width="0.8"/></svg></div>
<span class="t" style="left:1049px;top:635px;font-size:8px;line-height:12px;color:#1E1E1E;font-weight:bold;">Имя файла</span>
<span class="t" style="left:1049px;top:647.5px;font-size:7.85px;line-height:12px;color:#1E1E1E;">Имя файла проекта.</span>
<div class="a" style="left:22px;top:612px;width:1018px;height:12px;background:#F1F1F5;"></div>
<div class="a" style="left:22px;top:623px;width:1018px;height:1px;background:#D9DAE1;"></div>
<div class="a" style="left:21.5px;top:612.5px;width:39.5px;height:10.5px;background:#FCFCFD;border:1px solid #E2E3EA;"></div>
<span class="t" style="left:23px;top:612.5px;font-size:7.6px;line-height:11px;color:#1E1E1E;">177 %</span>
<svg class="a" style="left:55.5px;top:617.25px;" width="4" height="2.5" viewBox="0 0 4 2.5"><path d="M0 0 H4 L2.0 2.5 Z" fill="#444"/></svg>
<svg class="a" style="left:63.5px;top:613.5px;" width="9" height="9" viewBox="0 0 9 9"><path d="M1.4 5.2 L5 1.6 H8 V4.4 L4.4 8 Z" fill="#8A6FC0" stroke="#5B3F9A" stroke-width="0.7"/><path d="M0.6 8.4 L2.6 6.4" stroke="#5B3F9A" stroke-width="1"/></svg>
<svg class="a" style="left:91.5px;top:613.5px;" width="9" height="9" viewBox="0 0 9 9"><circle cx="4.5" cy="4.5" r="4" fill="#C9282D"/><path d="M2.8 2.8 L6.2 6.2 M6.2 2.8 L2.8 6.2" stroke="#fff" stroke-width="1.1"/></svg>
<span class="t" style="left:103px;top:612.5px;font-size:7.6px;line-height:11px;color:#1E1E1E;">2</span>
<svg class="a" style="left:121.5px;top:613.5px;" width="10" height="9" viewBox="0 0 10 9"><path d="M5 0.6 L9.6 8.4 H0.4 Z" fill="#E2B33C" stroke="#8A6A10" stroke-width="0.6"/><path d="M5 3 V6" stroke="#1E1E1E" stroke-width="1"/><rect x="4.5" y="6.7" width="1" height="1" fill="#1E1E1E"/></svg>
<span class="t" style="left:133.5px;top:612.5px;font-size:7.6px;line-height:11px;color:#1E1E1E;">0</span>
<svg class="a" style="left:158px;top:613.5px;" width="8" height="9" viewBox="0 0 8 9"><path d="M4 8.6 V1 M1.2 3.6 L4 0.8 L6.8 3.6" fill="none" stroke="#555" stroke-width="0.75"/></svg>
<svg class="a" style="left:177px;top:613.5px;" width="8" height="9" viewBox="0 0 8 9"><path d="M4 0.4 V8 M1.2 5.4 L4 8.2 L6.8 5.4" fill="none" stroke="#555" stroke-width="0.75"/></svg>
<div class="a" style="left:195px;top:613px;width:1px;height:10px;background:#CCCEDB;"></div>
<svg class="a" style="left:205px;top:613px;" width="10" height="10" viewBox="0 0 10 10"><path d="M2 8.6 L6.6 3" stroke="#8A6A2A" stroke-width="1.5"/><path d="M5.4 1.2 L8.6 4 L7 5.4 L4.2 2.8 Z" fill="#C9A227"/><path d="M1.6 1 L2.2 2.4 L3.6 2.6 L2.4 3.4 L2.8 4.8 L1.6 4 L0.6 4.8 L0.9 3.4 L0 2.6 L1.2 2.4 Z" fill="#6A8F3A"/></svg>
<svg class="a" style="left:216.5px;top:617.25px;" width="4" height="2.5" viewBox="0 0 4 2.5"><path d="M0 0 H4 L2.0 2.5 Z" fill="#333"/></svg>
<svg class="a" style="left:240px;top:615px;" width="5" height="6" viewBox="0 0 5 6"><path d="M4.6 0.2 V5.8 L0.6 3 Z" fill="#8E8F98"/></svg>
<div class="a" style="left:248px;top:615px;width:584px;height:5.5px;background:#C2C3C9;"></div>
<svg class="a" style="left:870px;top:615px;" width="5" height="6" viewBox="0 0 5 6"><path d="M0.4 0.2 V5.8 L4.4 3 Z" fill="#55565E"/></svg>
<span class="t" style="left:894.5px;top:612.5px;font-size:7.6px;line-height:11px;color:#1E1E1E;">Стр: 15</span>
<span class="t" style="left:931px;top:612.5px;font-size:7.6px;line-height:11px;color:#1E1E1E;">Симв: 9</span>
<span class="t" style="left:970.5px;top:612.5px;font-size:7.6px;line-height:11px;color:#1E1E1E;">Пробелы</span>
<span class="t" style="left:1016.3px;top:612.5px;font-size:7.6px;line-height:11px;color:#1E1E1E;letter-spacing:-0.8px;">CRLF</span>
<div class="a" style="left:22px;top:628.3px;width:1018px;height:45px;background:#F5F5F7;border:1px solid #E1E2E8;"></div>
<span class="t" style="left:24.5px;top:630.2px;font-size:7.7px;line-height:12px;color:#3A3A3A;">Вывод</span>
<svg class="a" style="left:51px;top:633px;" width="954" height="5" viewBox="0 0 954 5"><defs><pattern id="og" width="4" height="4" patternUnits="userSpaceOnUse"><rect x="0" y="0" width="1" height="1" fill="#B4B5C0"/><rect x="2" y="2" width="1" height="1" fill="#B4B5C0"/></pattern></defs><rect width="954" height="5" fill="url(#og)"/></svg>
<svg class="a" style="left:1007.5px;top:633.0px;" width="5" height="3" viewBox="0 0 5 3"><path d="M0 0 H5 L2.5 3 Z" fill="#222"/></svg>
<svg class="a" style="left:1018px;top:631px;" width="6" height="7" viewBox="0 0 6 7"><path d="M1.6 0.8 H4.4 V4.4 H1.6 Z M0.6 4.6 H5.4 M3 4.6 V6.8" fill="none" stroke="#222" stroke-width="0.9"/></svg>
<svg class="a" style="left:1029px;top:631px;" width="7" height="7" viewBox="0 0 7 7"><path d="M0.8 0.8 L6.2 6.2 M6.2 0.8 L0.8 6.2" stroke="#222" stroke-width="1"/></svg>
<span class="t" style="left:26.6px;top:646.3px;font-size:7.72px;line-height:12px;color:#3A3A3A;">Показать выходные данные из:</span>
<div class="a" style="left:144px;top:645px;width:198px;height:13.5px;background:#FFFFFF;border:1px solid #DCDDE4;"></div>
<svg class="a" style="left:336.0px;top:651.25px;" width="4" height="2.5" viewBox="0 0 4 2.5"><path d="M0 0 H4 L2.0 2.5 Z" fill="#444"/></svg>
<div class="a" style="left:347.5px;top:646px;width:1px;height:12px;background:#DCDDE4;"></div>
<svg class="a" style="left:353px;top:647.5px;" width="10" height="9" viewBox="0 0 10 9"><rect x="0.8" y="2.6" width="8" height="5.6" fill="#DCDDE2" stroke="#CFD0D8" stroke-width="0.8"/><path d="M1 1.2 H5" stroke="#CFD0D8" stroke-width="0.9"/></svg>
<svg class="a" style="left:375px;top:647.5px;" width="10" height="9" viewBox="0 0 10 9"><rect x="0.8" y="2.6" width="8" height="5.6" fill="#DCDDE2" stroke="#CFD0D8" stroke-width="0.8"/><path d="M1 1.2 H5" stroke="#CFD0D8" stroke-width="0.9"/></svg>
<svg class="a" style="left:390px;top:647.5px;" width="10" height="9" viewBox="0 0 10 9"><rect x="0.8" y="2.6" width="8" height="5.6" fill="#DCDDE2" stroke="#CFD0D8" stroke-width="0.8"/><path d="M1 1.2 H5" stroke="#CFD0D8" stroke-width="0.9"/></svg>
<svg class="a" style="left:408px;top:647.5px;" width="10" height="9" viewBox="0 0 10 9"><rect x="0.8" y="2.6" width="8" height="5.6" fill="#DCDDE2" stroke="#CFD0D8" stroke-width="0.8"/><path d="M1 1.2 H5" stroke="#CFD0D8" stroke-width="0.9"/></svg>
<div class="a" style="left:368.5px;top:646px;width:1px;height:12px;background:#DCDDE4;"></div>
<div class="a" style="left:403px;top:646px;width:1px;height:12px;background:#DCDDE4;"></div>
<div class="a" style="left:422px;top:646px;width:1px;height:12px;background:#DCDDE4;"></div>
<svg class="a" style="left:428.5px;top:647.5px;" width="10" height="8" viewBox="0 0 10 8"><path d="M0.6 1.4 H3 M0.6 3.6 H3 M0.6 5.8 H2" stroke="#1F5FB4" stroke-width="0.9"/><path d="M4 2.4 H8.8 V6.4 H3.4 M4.8 5 L3.2 6.4 L4.8 7.6" fill="none" stroke="#2B2B2B" stroke-width="0.9"/></svg>
<span class="t" style="left:928.5px;top:631px;font-size:12.6px;line-height:16px;color:#C4C4C8;">Активация Windows</span>
<span class="t" style="left:928.5px;top:648px;font-size:10.05px;line-height:12px;color:#C9C9CD;">Чтобы активировать Windows, перейдите в раздел "Параметры".</span>
<span class="t" style="left:1049px;top:635px;font-size:8px;line-height:12px;color:#1E1E1E;font-weight:bold;">Имя файла</span>
<span class="t" style="left:1049px;top:647.5px;font-size:7.85px;line-height:12px;color:#1E1E1E;">Имя файла проекта.</span>
<div class="a" style="left:0px;top:678px;width:1280px;height:15.5px;background:#0C72B9;"></div>
<svg class="a" style="left:3px;top:680.5px;" width="11" height="11" viewBox="0 0 11 11"><path d="M1 1 H10 V7.6 H6.6 L4.4 9.8 V7.6 H1 Z" fill="none" stroke="#fff" stroke-width="1.1"/></svg>
<span class="t" style="left:18px;top:680.1px;font-size:8px;line-height:12px;color:#FFFFFF;">Готово</span>
<svg class="a" style="left:941px;top:680.5px;" width="8" height="10" viewBox="0 0 8 10"><path d="M4 9.6 V1 M1 4 L4 0.9 L7 4" fill="none" stroke="#fff" stroke-width="1"/></svg>
<span class="t" style="left:955px;top:680.1px;font-size:8px;line-height:12px;color:#FFFFFF;">Добавить в систему управления версиями</span>
<svg class="a" style="left:1116px;top:685px;" width="5" height="3" viewBox="0 0 5 3"><path d="M0 3 H5 L2.5 0 Z" fill="#fff"/></svg>
<svg class="a" style="left:1134.5px;top:680px;" width="11" height="11" viewBox="0 0 11 11"><path d="M5.5 0.4 L10.6 5.5 L5.5 10.6 L0.4 5.5 Z" fill="#fff"/><path d="M4.4 3.4 V7.6 M4.4 5 C6.6 5 6.6 5.4 6.6 7" fill="none" stroke="#0C72B9" stroke-width="0.9"/></svg>
<span class="t" style="left:1150px;top:680.1px;font-size:8px;line-height:12px;color:#FFFFFF;">Выбрать репозиторий</span>
<svg class="a" style="left:1236px;top:685px;" width="5" height="3" viewBox="0 0 5 3"><path d="M0 3 H5 L2.5 0 Z" fill="#fff"/></svg>
<svg class="a" style="left:1253.5px;top:680px;" width="12" height="12" viewBox="0 0 12 12"><path d="M2 8 C3 7 3 5.6 3 4.4 C3 2.6 4 1.4 5.4 1.4 C6.8 1.4 7.8 2.6 7.8 4.4 C7.8 5.6 7.8 7 8.8 8 Z" fill="none" stroke="#fff" stroke-width="1"/><circle cx="9.6" cy="8.4" r="3.2" fill="#D0323A"/><text x="8.4" y="10.3" font-family="Liberation Sans,sans-serif" font-size="5.2" fill="#fff" font-weight="bold">1</text></svg>
<div class="a" style="left:437.8px;top:658.8px;width:404.2px;height:28.7px;background:#FFFFFF;box-shadow:0 0 1.5px rgba(0,0,0,0.25);"></div>
<div class="a" style="left:444.5px;top:668.5px;width:1.2px;height:9px;background:#D4D4D4;"></div>
<div class="a" style="left:447.8px;top:668.5px;width:1.2px;height:9px;background:#D4D4D4;"></div>
<span class="t" style="left:455.5px;top:667.5px;font-size:8.0px;line-height:12px;color:#333;">Приложению meet.google.com предоставлен доступ к вашему экрану.</span>
<div class="a" style="left:722px;top:663px;width:80px;height:20.5px;background:#1B6FD9;border-radius:2px;"></div>
<span class="t" style="left:732px;top:667.3px;font-size:8px;line-height:12px;color:#FFFFFF;font-weight:bold;letter-spacing:-0.25px;">Закрыть доступ</span>
<span class="t" style="left:808.5px;top:667.5px;font-size:8.2px;line-height:12px;color:#5D86D1;">Скрыть</span>
<div class="a" style="left:0px;top:693.5px;width:1280px;height:26.5px;background:#1E2B37;"></div>
<svg class="a" style="left:11px;top:700px;" width="12" height="12" viewBox="0 0 12 12"><path d="M0 1.7 L5.2 1 V5.6 H0 Z M5.9 0.9 L12 0 V5.6 H5.9 Z M0 6.3 H5.2 V10.9 L0 10.2 Z M5.9 6.3 H12 V12 L5.9 11.1 Z" fill="#fff"/></svg>
<div class="a" style="left:32px;top:694px;width:230px;height:26px;background:#F0F3F0;"></div>
<svg class="a" style="left:41px;top:700px;" width="12" height="12" viewBox="0 0 12 12"><circle cx="7.4" cy="4.6" r="3.4" fill="none" stroke="#222" stroke-width="1.1"/><path d="M5 7 L1 11" stroke="#222" stroke-width="1.2"/></svg>
<span class="t" style="left:59px;top:700px;font-size:9.7px;line-height:14px;color:#3A3A3A;">Введите здесь текст для поиска</span>
<svg class="a" style="left:212px;top:696px;" width="50" height="24" viewBox="0 0 50 24"><path d="M2 24 C3 16 5 12 4 8 C7 12 7 18 8 24 Z M9 24 C10 18 9 15 11 13 C12 17 12 20 13 24 Z M38 24 C39 18 40 16 42 13 C43 17 43 20 44 24 Z M45 24 C46 19 47 17 48 15 C49 18 49 21 50 24 Z" fill="#A8C64A"/><path d="M8 10 C13 6 22 6 27 10 L31 6 L30 13 C26 15 16 16 8 10 Z" fill="#8F8A55"/><path d="M22 18 C27 13 36 13 41 17 L45 14 L44 21 C39 23 29 23 22 18 Z" fill="#A39A5C"/><path d="M12 7 L16 3 L18 7 Z M28 14 L32 10 L34 14 Z" fill="#D7C36A"/><path d="M36 3 L37 5.4 L39.4 6 L37 6.8 L36 9 L35 6.8 L32.6 6 L35 5.4 Z" fill="#B79AD8"/><path d="M21 2 L21.6 3.4 L23 4 L21.6 4.6 L21 6 L20.4 4.6 L19 4 L20.4 3.4 Z" fill="#B79AD8"/></svg>
<svg class="a" style="left:272px;top:701px;" width="12" height="11" viewBox="0 0 12 11"><rect x="0.6" y="2.4" width="7" height="6.4" fill="none" stroke="#fff" stroke-width="1.1"/><path d="M9.6 2 V9.2 M11.4 3 V8.2 M1 0.8 H7.2 M1 10.4 H7.2" stroke="#fff" stroke-width="1"/></svg>
<svg class="a" style="left:303px;top:699px;" width="16" height="16" viewBox="0 0 16 16"><circle cx="8" cy="8" r="7.4" fill="#1B8FD6"/><path d="M1 9 C1 4 5 1.4 8.6 1.4 C12.6 1.4 15 4.4 15 7.4 C15 9.6 13.4 10.6 11.8 10.6 C10.4 10.6 9.8 10 10.2 9.2 C10.6 8.4 10.6 7 9 6 C6.6 4.8 2.8 6 1 9 Z" fill="#3CCB8E"/><path d="M4.6 9.4 C4.6 12.6 7.4 14.8 10.6 14.4 C8 15.8 3.2 15 1.2 10.6 C2 9 3.6 8.4 4.6 9.4 Z" fill="#0F5EA8"/></svg>
<svg class="a" style="left:336px;top:700px;" width="16" height="13" viewBox="0 0 16 13"><path d="M0.6 1 H6 L7.4 2.6 H15.4 V12.4 H0.6 Z" fill="#F3C04B"/><rect x="0.6" y="4.4" width="14.8" height="8" fill="#F8D775"/><rect x="4" y="7" width="8" height="5.4" fill="#3D9BE0"/></svg>
<div class="a" style="left:333px;top:718.5px;width:22px;height:1.5px;background:#8FB8E8;"></div>
<svg class="a" style="left:369px;top:699px;" width="15" height="15" viewBox="0 0 15 15"><path d="M4.6 4 V2.4 C4.6 0.4 10.4 0.4 10.4 2.4 V4" fill="none" stroke="#E8E8E8" stroke-width="1.2"/><rect x="1" y="3.6" width="13" height="10.8" rx="1.2" fill="#F4F4F4"/><rect x="4.6" y="6" width="2.6" height="2.6" fill="#F25022"/><rect x="7.8" y="6" width="2.6" height="2.6" fill="#7FBA00"/><rect x="4.6" y="9.2" width="2.6" height="2.6" fill="#00A4EF"/><rect x="7.8" y="9.2" width="2.6" height="2.6" fill="#FFB900"/></svg>
<svg class="a" style="left:401px;top:699px;" width="16" height="16" viewBox="0 0 16 16"><circle cx="8" cy="8" r="7.6" fill="#FFFFFF"/><path d="M4.4 3.4 L8 8.4 V13 M11.6 3.4 L8 8.4" fill="none" stroke="#E5322D" stroke-width="2"/></svg>
<svg class="a" style="left:434px;top:699px;" width="16" height="16" viewBox="0 0 16 16"><circle cx="8" cy="8" r="7.6" fill="#E8453C"/><path d="M8 8 L1.5 4.2 A7.6 7.6 0 0 0 8 15.6 L11.6 9.6 Z" fill="#2DA44E"/><path d="M8 8 L11.6 9.9 L8.2 15.6 A7.6 7.6 0 0 0 14.6 4.2 H8 Z" fill="#F7C52B"/><circle cx="8" cy="8" r="3.5" fill="#fff"/><circle cx="8" cy="8" r="2.7" fill="#3F86E8"/></svg>
<div class="a" style="left:431px;top:718.5px;width:22px;height:1.5px;background:#8FB8E8;"></div>
<svg class="a" style="left:467px;top:699px;" width="16" height="16" viewBox="0 0 16 16"><circle cx="8" cy="8" r="7.6" fill="#E5322D"/><text x="4.4" y="12" font-family="Liberation Sans,sans-serif" font-size="11" font-weight="bold" fill="#fff">Я</text></svg>
<div class="a" style="left:464px;top:718.5px;width:22px;height:1.5px;background:#8FB8E8;"></div>
<svg class="a" style="left:500px;top:699px;" width="16" height="16" viewBox="0 0 16 16"><circle cx="8" cy="8" r="7.6" fill="#E8453C"/><path d="M8 8 L1.5 4.2 A7.6 7.6 0 0 0 8 15.6 L11.6 9.6 Z" fill="#2DA44E"/><path d="M8 8 L11.6 9.9 L8.2 15.6 A7.6 7.6 0 0 0 14.6 4.2 H8 Z" fill="#F7C52B"/><circle cx="8" cy="8" r="3.5" fill="#fff"/><circle cx="8" cy="8" r="2.7" fill="#3F86E8"/></svg>
<svg class="a" style="left:508px;top:708px;" width="8" height="8" viewBox="0 0 8 8"><circle cx="4" cy="4" r="3.8" fill="#222"/><path d="M2 2 L6 6" stroke="#bbb" stroke-width="1"/></svg>
<div class="a" style="left:497px;top:718.5px;width:22px;height:1.5px;background:#8FB8E8;"></div>
<div class="a" style="left:524px;top:694px;width:32px;height:26px;background:#44505C;"></div>
<div class="a" style="left:524px;top:718.5px;width:32px;height:1.5px;background:#8FB8E8;"></div>
<svg class="a" style="left:532px;top:699px;" width="16" height="16" viewBox="0 0 16 16"><path d="M11.4 1 L15.4 2.8 V13.2 L11.4 15 L5 9.4 L2.2 11.6 L0.8 10.9 V5.1 L2.2 4.4 L5 6.6 Z M11.4 5.2 L7.6 8 L11.4 10.8 Z" fill="#A57BE0" fill-rule="evenodd"/></svg>
<svg class="a" style="left:565px;top:699px;" width="16" height="16" viewBox="0 0 16 16"><circle cx="8" cy="8" r="7.4" fill="#1B1B1F" stroke="#D8D8D8" stroke-width="1"/><circle cx="8" cy="5" r="2.2" fill="none" stroke="#D8D8D8" stroke-width="1"/><circle cx="5.4" cy="9.6" r="2.2" fill="none" stroke="#D8D8D8" stroke-width="1"/><circle cx="10.6" cy="9.6" r="2.2" fill="none" stroke="#D8D8D8" stroke-width="1"/></svg>
<svg class="a" style="left:1094px;top:702px;" width="9" height="7" viewBox="0 0 9 7"><path d="M0.8 5.8 L4.5 1.4 L8.2 5.8" fill="none" stroke="#fff" stroke-width="1"/></svg>
<svg class="a" style="left:1110.5px;top:699.5px;" width="9" height="14" viewBox="0 0 9 14"><rect x="2.4" y="0.6" width="4.2" height="8" rx="2.1" fill="#fff"/><path d="M0.8 6.4 C0.8 11 8.2 11 8.2 6.4 M4.5 10 V12.6 M2.4 12.8 H6.6" fill="none" stroke="#fff" stroke-width="1"/></svg>
<svg class="a" style="left:1125.5px;top:700.5px;" width="13" height="12" viewBox="0 0 13 12"><rect x="3" y="0.8" width="9" height="6.6" fill="none" stroke="#fff" stroke-width="1.1"/><rect x="0.6" y="5.4" width="3.4" height="5.8" fill="#1E2B37" stroke="#fff" stroke-width="1"/><path d="M6 9.8 H10" stroke="#fff" stroke-width="1"/></svg>
<svg class="a" style="left:1141.5px;top:701px;" width="13" height="11" viewBox="0 0 13 11"><path d="M0.8 3.6 H3 L5.8 1 V10 L3 7.4 H0.8 Z" fill="none" stroke="#fff" stroke-width="1"/><path d="M7.6 3.4 C8.6 4.6 8.6 6.4 7.6 7.6 M9.4 2 C11.2 4 11.2 7 9.4 9 " fill="none" stroke="#fff" stroke-width="0.9"/></svg>
<svg class="a" style="left:1158.5px;top:700px;" width="13" height="13" viewBox="0 0 13 13"><path d="M3.4 9.6 L9.4 3.6 M8 2.4 C9.4 0.8 12.2 2.6 10.6 4.8 M2.4 8.2 C0.8 9.8 3 12.4 5 10.8 M9.6 7.4 L11.4 9.4" fill="none" stroke="#fff" stroke-width="1.1"/></svg>
<span class="t" style="left:1181px;top:701.5px;font-size:7.6px;line-height:11px;color:#FFFFFF;">ENG</span>
<span class="t" style="left:1213.5px;top:695px;font-size:7.8px;line-height:12px;color:#FFFFFF;">18:44</span>
<span class="t" style="left:1205px;top:706.4px;font-size:7.8px;line-height:12px;color:#FFFFFF;letter-spacing:-0.25px;">14.07.2022</span>
<svg class="a" style="left:1252.5px;top:700px;" width="12" height="12" viewBox="0 0 12 12"><path d="M1 1 H11 V8.6 H8.6 V11 L6 8.6 H1 Z" fill="#fff"/><path d="M3 3.4 H9 M3 5.8 H9" stroke="#1E2B37" stroke-width="0.9"/></svg>
<div class="a" style="left:1007.5px;top:115px;width:268.5px;height:426.5px;background:#F6F6F8;border:1px solid #DFE0E4;box-shadow:1.5px 1.5px 1.5px rgba(0,0,0,0.5);"></div>
<div class="a" style="left:1008.8px;top:259.3px;width:266px;height:14.5px;background:#C8DDF3;border:1px solid #6C8AAE;"></div>
<span class="t" style="left:1030px;top:119.7px;font-size:7.9px;line-height:12px;color:#1E1E1E;">Собрать</span>
<span class="t" style="left:1030px;top:134.2px;font-size:7.9px;line-height:12px;color:#1E1E1E;">Пересобрать</span>
<span class="t" style="left:1030px;top:149.1px;font-size:7.9px;line-height:12px;color:#1E1E1E;">Очистить</span>
<span class="t" style="left:1030px;top:163.9px;font-size:7.9px;line-height:12px;color:#1E1E1E;">Анализ и очистка кода</span>
<span class="t" style="left:1030px;top:178.7px;font-size:7.9px;line-height:12px;color:#1E1E1E;">Упаковать</span>
<span class="t" style="left:1030px;top:193.5px;font-size:7.9px;line-height:12px;color:#1E1E1E;">Опубликовать...</span>
<span class="t" style="left:1030px;top:211.3px;font-size:7.9px;line-height:12px;color:#1E1E1E;">Открыть элемент как корень обозревателя</span>
<span class="t" style="left:1030px;top:226.1px;font-size:7.9px;line-height:12px;color:#1E1E1E;">Новое представление: Обозреватель решений</span>
<span class="t" style="left:1030px;top:244.1px;font-size:7.9px;line-height:12px;color:#1E1E1E;">Изменить файл проекта</span>
<span class="t" style="left:1030px;top:261.7px;font-size:7.9px;line-height:12px;color:#1E1E1E;">Добавить</span>
<span class="t" style="left:1030px;top:276.7px;font-size:7.9px;line-height:12px;color:#1E1E1E;">Управление пакетами NuGet...</span>
<span class="t" style="left:1030px;top:291.3px;font-size:7.9px;line-height:12px;color:#1E1E1E;">Управление секретами пользователей</span>
<span class="t" style="left:1030px;top:305.9px;font-size:7.9px;line-height:12px;color:#1E1E1E;">Удалить неиспользуемые ссылки...</span>
<span class="t" style="left:1030px;top:320.7px;font-size:7.9px;line-height:12px;color:#1E1E1E;">Синхронизация пространства имен</span>
<span class="t" style="left:1030px;top:338.7px;font-size:7.9px;line-height:12px;color:#1E1E1E;">Назначить в качестве запускаемого проекта</span>
<span class="t" style="left:1030px;top:353.1px;font-size:7.9px;line-height:12px;color:#1E1E1E;">Отладка</span>
<span class="t" style="left:1030px;top:371.1px;font-size:7.9px;line-height:12px;color:#1E1E1E;">Вырезать</span>
<span class="t" style="left:1030px;top:385.7px;font-size:7.9px;line-height:12px;color:#1E1E1E;">Удалить</span>
<span class="t" style="left:1030px;top:400.5px;font-size:7.9px;line-height:12px;color:#1E1E1E;">Переименовать</span>
<span class="t" style="left:1030px;top:418.5px;font-size:7.9px;line-height:12px;color:#1E1E1E;">Выгрузить проект</span>
<span class="t" style="left:1030px;top:433.1px;font-size:7.9px;line-height:12px;color:#1E1E1E;">Загрузить прямые зависимости</span>
<span class="t" style="left:1030px;top:447.7px;font-size:7.9px;line-height:12px;color:#1E1E1E;">Загрузить все дерево зависимостей</span>
<span class="t" style="left:1030px;top:465.7px;font-size:7.9px;line-height:12px;color:#1E1E1E;">Копировать полный путь</span>
<span class="t" style="left:1030px;top:480.5px;font-size:7.9px;line-height:12px;color:#1E1E1E;">Открыть папку в проводнике</span>
<span class="t" style="left:1030px;top:495.1px;font-size:7.9px;line-height:12px;color:#1E1E1E;">Открыть в терминале</span>
<span class="t" style="left:1030px;top:509.7px;font-size:7.9px;line-height:12px;color:#1E1E1E;">Проектировать в Blend...</span>
<span class="t" style="left:1030px;top:527.7px;font-size:7.9px;line-height:12px;color:#1E1E1E;">Свойства</span>
<div class="a" style="left:1030px;top:207.6px;width:245px;height:1px;background:#E7E8EC;"></div>
<div class="a" style="left:1030px;top:240.2px;width:245px;height:1px;background:#E7E8EC;"></div>
<div class="a" style="left:1030px;top:257.6px;width:245px;height:1px;background:#E7E8EC;"></div>
<div class="a" style="left:1030px;top:335px;width:245px;height:1px;background:#E7E8EC;"></div>
<div class="a" style="left:1030px;top:367.2px;width:245px;height:1px;background:#E7E8EC;"></div>
<div class="a" style="left:1030px;top:414.6px;width:245px;height:1px;background:#E7E8EC;"></div>
<div class="a" style="left:1030px;top:462px;width:245px;height:1px;background:#E7E8EC;"></div>
<div class="a" style="left:1030px;top:524px;width:245px;height:1px;background:#E7E8EC;"></div>
<svg class="a" style="left:1266.5px;top:167.0px;" width="3" height="5" viewBox="0 0 3 5"><path d="M0 0 V5 L3 2.5 Z" fill="#444"/></svg>
<svg class="a" style="left:1266.5px;top:264.7px;" width="3" height="5" viewBox="0 0 3 5"><path d="M0 0 V5 L3 2.5 Z" fill="#444"/></svg>
<svg class="a" style="left:1266.5px;top:356.1px;" width="3" height="5" viewBox="0 0 3 5"><path d="M0 0 V5 L3 2.5 Z" fill="#444"/></svg>
<span class="t" style="left:1227px;top:371.1px;font-size:7.9px;line-height:12px;color:#1E1E1E;">Ctrl+X</span>
<span class="t" style="left:1227px;top:385.7px;font-size:7.9px;line-height:12px;color:#1E1E1E;">Del</span>
<span class="t" style="left:1227px;top:400.5px;font-size:7.9px;line-height:12px;color:#1E1E1E;">F2</span>
<span class="t" style="left:1227px;top:527.7px;font-size:7.9px;line-height:12px;color:#1E1E1E;">Alt+ВВОД</span>
<svg class="a" style="left:1011px;top:119.5px;" width="10" height="11" viewBox="0 0 10 11"><path d="M5 0.4 V4 M3.4 2.8 L5 4.4 L6.6 2.8" fill="none" stroke="#3C3C3C" stroke-width="0.75"/><g fill="#2B2B2B"><rect x="0.6" y="5.6" width="2.4" height="2"/><rect x="3.8" y="5.6" width="2.4" height="2"/><rect x="7" y="5.6" width="2.4" height="2"/><rect x="0.6" y="8.4" width="2.4" height="2"/><rect x="3.8" y="8.4" width="2.4" height="2"/><rect x="7" y="8.4" width="2.4" height="2"/></g></svg>
<svg class="a" style="left:1010.5px;top:193.5px;" width="11" height="10" viewBox="0 0 11 10"><circle cx="4.6" cy="5.4" r="3.9" fill="#DCE8F6" stroke="#2D5FA8" stroke-width="1"/><path d="M0.8 5.4 H8.4 M4.6 1.6 C2.6 3.6 2.6 7.2 4.6 9.2 C6.6 7.2 6.6 3.6 4.6 1.6" fill="none" stroke="#2D5FA8" stroke-width="0.8"/><path d="M9.6 4.6 V0.8 M8.4 2 L9.6 0.6 L10.8 2" fill="none" stroke="#2B2B2B" stroke-width="0.8"/></svg>
<svg class="a" style="left:1011px;top:226px;" width="10" height="10" viewBox="0 0 10 10"><path d="M1 3.4 H9 V9.2 H1 Z" fill="#FAFAFA" stroke="#666" stroke-width="0.9"/><path d="M1 3.4 L3 1.4 V3.4" fill="none" stroke="#666" stroke-width="0.8"/><path d="M2 0.4 V2.4 M1 1.4 H3" stroke="#C9A227" stroke-width="0.8"/></svg>
<svg class="a" style="left:1011px;top:244.5px;" width="10" height="10" viewBox="0 0 10 10"><path d="M3 8.4 C0.6 7 1 2.8 5 2.8 H8.4 M6.4 0.8 L8.6 2.8 L6.4 4.8" fill="none" stroke="#555" stroke-width="0.9"/></svg>
<svg class="a" style="left:1011.5px;top:277px;" width="9" height="10" viewBox="0 0 9 10"><circle cx="1.1" cy="1.3" r="0.9" fill="#1A3E7A"/><rect x="1.6" y="2" width="7" height="7" rx="2.2" fill="#1A3E7A"/><circle cx="6" cy="4.8" r="1.7" fill="#fff"/></svg>
<svg class="a" style="left:1011px;top:339px;" width="10" height="10" viewBox="0 0 10 10"><circle cx="5" cy="5" r="2.7" fill="none" stroke="#3A3A3A" stroke-width="1"/><circle cx="5" cy="5" r="1" fill="none" stroke="#3A3A3A" stroke-width="0.6"/><g stroke="#3A3A3A" stroke-width="1"><path d="M5 0.4 V2 M5 8 V9.6 M0.4 5 H2 M8 5 H9.6 M1.7 1.7 L2.9 2.9 M7.1 7.1 L8.3 8.3 M1.7 8.3 L2.9 7.1 M7.1 2.9 L8.3 1.7"/></g></svg>
<svg class="a" style="left:1011.5px;top:371px;" width="9" height="11" viewBox="0 0 9 11"><path d="M2.4 0.6 L5.6 7 M6.6 0.6 L3.4 7" stroke="#3C3C3C" stroke-width="0.75"/><circle cx="2.6" cy="8.6" r="1.5" fill="none" stroke="#3C3C3C" stroke-width="0.75"/><circle cx="6.4" cy="8.6" r="1.5" fill="none" stroke="#3C3C3C" stroke-width="0.75"/></svg>
<svg class="a" style="left:1012px;top:386.5px;" width="9" height="9" viewBox="0 0 9 9"><path d="M0.8 0.8 L8.2 8.2 M8.2 0.8 L0.8 8.2" stroke="#D64550" stroke-width="1.1"/></svg>
<svg class="a" style="left:1010.5px;top:401px;" width="11" height="10" viewBox="0 0 11 10"><rect x="0.6" y="2.6" width="5.6" height="3.6" fill="#fff" stroke="#777" stroke-width="0.8"/><path d="M7.6 0.8 V8.6 M6.4 0.8 H8.8 M6.4 8.6 H8.8" stroke="#555" stroke-width="0.8"/><path d="M1 7.6 H5" stroke="#777" stroke-width="0.8"/></svg>
<svg class="a" style="left:1011px;top:466px;" width="10" height="10" viewBox="0 0 10 10"><rect x="3" y="0.8" width="5.6" height="6.6" fill="#fff" stroke="#3C3C3C" stroke-width="0.75"/><rect x="0.8" y="2.8" width="5.6" height="6.6" fill="#fff" stroke="#3C3C3C" stroke-width="0.75"/></svg>
<svg class="a" style="left:1011px;top:480.5px;" width="10" height="10" viewBox="0 0 10 10"><path d="M3 8.4 C0.6 7 1 2.8 5 2.8 H8.4 M6.4 0.8 L8.6 2.8 L6.4 4.8" fill="none" stroke="#3D6FB5" stroke-width="0.9"/></svg>
<svg class="a" style="left:1011px;top:495.5px;" width="10" height="9" viewBox="0 0 10 9"><rect x="0.6" y="0.6" width="8.8" height="7.8" fill="#fff" stroke="#3C3C3C" stroke-width="0.75"/><path d="M0.6 2.4 H9.4" stroke="#3C3C3C" stroke-width="0.75"/><path d="M2 4 L3.6 5.2 L2 6.4 M4.4 6.8 H7" fill="none" stroke="#2B2B2B" stroke-width="0.7"/></svg>
<svg class="a" style="left:1011px;top:528px;" width="10" height="10" viewBox="0 0 10 10"><path d="M9.2 2.6 C9.2 4.3 7.5 5.2 6.2 4.6 L2.2 8.8 C1.5 9.5 0.5 8.5 1.2 7.8 L5.4 3.8 C4.8 2.3 6 0.6 7.8 0.9 L6.5 2.2 L7 3.1 L7.9 3.4 Z" fill="#2B2B2B"/></svg>
<div class="a" style="left:726.3px;top:259.4px;width:282px;height:226px;background:#F6F6F8;border:1px solid #DFE0E4;box-shadow:1.5px 1.5px 1.5px rgba(0,0,0,0.5);"></div>
<div class="a" style="left:727.3px;top:276.3px;width:280px;height:14.4px;background:#C8DDF3;border:1px solid #6C8AAE;"></div>
<span class="t" style="left:748.7px;top:263.4px;font-size:7.9px;line-height:12px;color:#1E1E1E;">Создать элемент...</span>
<span class="t" style="left:748.7px;top:278.4px;font-size:7.9px;line-height:12px;color:#1E1E1E;">Существующий элемент...</span>
<span class="t" style="left:748.7px;top:293px;font-size:7.9px;line-height:12px;color:#1E1E1E;">Создать папку</span>
<span class="t" style="left:748.7px;top:311px;font-size:7.9px;line-height:12px;color:#1E1E1E;">Machine Learning Model...</span>
<span class="t" style="left:748.7px;top:329.2px;font-size:7.9px;line-height:12px;color:#1E1E1E;">Ссылка на проект...</span>
<span class="t" style="left:748.7px;top:343.8px;font-size:7.9px;line-height:12px;color:#1E1E1E;">Ссылка на общий проект...</span>
<span class="t" style="left:748.7px;top:358.4px;font-size:7.9px;line-height:12px;color:#1E1E1E;">Ссылка на модель COM...</span>
<span class="t" style="left:748.7px;top:376.4px;font-size:7.9px;line-height:12px;color:#1E1E1E;">Ссылка на службу...</span>
<span class="t" style="left:748.7px;top:391px;font-size:7.9px;line-height:12px;color:#1E1E1E;">Подключенная служба</span>
<span class="t" style="left:748.7px;top:409px;font-size:7.9px;line-height:12px;color:#1E1E1E;">Окно (WPF)</span>
<span class="t" style="left:748.7px;top:423.6px;font-size:7.9px;line-height:12px;color:#1E1E1E;">Страница (WPF)...</span>
<span class="t" style="left:748.7px;top:438.4px;font-size:7.9px;line-height:12px;color:#1E1E1E;">Пользовательский элемент управления (WPF)...</span>
<span class="t" style="left:748.7px;top:456.4px;font-size:7.9px;line-height:12px;color:#1E1E1E;">Словарь ресурсов (WPF)...</span>
<span class="t" style="left:748.7px;top:471px;font-size:7.9px;line-height:12px;color:#1E1E1E;">Класс...</span>
<div class="a" style="left:748.5px;top:307.2px;width:259px;height:1px;background:#E7E8EC;"></div>
<div class="a" style="left:748.5px;top:325.2px;width:259px;height:1px;background:#E7E8EC;"></div>
<div class="a" style="left:748.5px;top:372.8px;width:259px;height:1px;background:#E7E8EC;"></div>
<div class="a" style="left:748.5px;top:405.2px;width:259px;height:1px;background:#E7E8EC;"></div>
<div class="a" style="left:748.5px;top:452.8px;width:259px;height:1px;background:#E7E8EC;"></div>
<span class="t" style="left:950px;top:263.4px;font-size:7.9px;line-height:12px;color:#1E1E1E;">Ctrl+Shift+A</span>
<span class="t" style="left:950px;top:278.4px;font-size:7.9px;line-height:12px;color:#1E1E1E;">Shift+Alt+A</span>
<svg class="a" style="left:730px;top:263.5px;" width="10" height="10" viewBox="0 0 10 10"><rect x="2.4" y="2.4" width="6.8" height="6.8" fill="#fff" stroke="#555" stroke-width="0.9"/><path d="M2 0.4 V3.4 M0.5 1.9 H3.5" stroke="#C9A227" stroke-width="0.9"/></svg>
<svg class="a" style="left:730px;top:278.5px;" width="10" height="10" viewBox="0 0 10 10"><rect x="2.4" y="2.4" width="6.8" height="6.8" fill="#EAF2FB" stroke="#2D5FA8" stroke-width="0.9"/><path d="M2 0.4 V3.4 M0.5 1.9 H3.5" stroke="#2D5FA8" stroke-width="0.9"/></svg>
<svg class="a" style="left:730px;top:293.5px;" width="11" height="10" viewBox="0 0 11 10"><path d="M0.6 3.6 H4 L5 4.6 H10 V9.4 H0.6 Z" fill="#DDB871" stroke="#B8924A" stroke-width="0.7"/><path d="M2 0.4 V3 M0.7 1.7 H3.3" stroke="#C9A227" stroke-width="0.9"/></svg>
<svg class="a" style="left:730px;top:311.5px;" width="10" height="10" viewBox="0 0 10 10"><circle cx="5" cy="5" r="2" fill="#3FB7A0"/><g stroke="#3FB7A0" stroke-width="1"><path d="M5 0.6 V2.4 M5 7.6 V9.4 M0.6 5 H2.4 M7.6 5 H9.4 M1.9 1.9 L3.1 3.1 M6.9 6.9 L8.1 8.1 M1.9 8.1 L3.1 6.9 M6.9 3.1 L8.1 1.9"/></g></svg>
<svg class="a" style="left:730px;top:391.5px;" width="11" height="10" viewBox="0 0 11 10"><path d="M3 7.6 C0.6 7.6 0.4 4.4 2.8 4.2 C3 1.4 7.4 1.2 7.8 4 C10.4 4 10.4 7.6 8 7.6 Z" fill="none" stroke="#3A9B84" stroke-width="0.9"/><path d="M5.4 4.6 V9.4 M4 6 L5.4 4.4 L6.8 6" fill="none" stroke="#3A9B84" stroke-width="0.8"/></svg>
<svg class="a" style="left:730px;top:409.5px;" width="10" height="10" viewBox="0 0 10 10"><rect x="0.6" y="0.8" width="8.8" height="6.6" fill="#fff" stroke="#3C3C3C" stroke-width="0.75"/><path d="M0.6 2.6 H9.4" stroke="#3C3C3C" stroke-width="0.75"/><path d="M2 8 L0.8 8.9 L2 9.8 M3.4 8 L4.6 8.9 L3.4 9.8" fill="none" stroke="#3C3C3C" stroke-width="0.6"/></svg>
<svg class="a" style="left:730px;top:424px;" width="10" height="11" viewBox="0 0 10 11"><path d="M1.6 0.8 H6.4 L8.6 3 V8 H1.6 Z" fill="#fff" stroke="#3C3C3C" stroke-width="0.75"/><path d="M2 8.6 L0.8 9.5 L2 10.4 M3.4 8.6 L4.6 9.5 L3.4 10.4" fill="none" stroke="#3C3C3C" stroke-width="0.6"/></svg>
<svg class="a" style="left:730px;top:438.5px;" width="11" height="11" viewBox="0 0 11 11"><circle cx="7.4" cy="2.6" r="1.8" fill="none" stroke="#3C3C3C" stroke-width="0.75"/><path d="M4.6 8 C4.6 4.4 10.2 4.4 10.2 8" fill="none" stroke="#3C3C3C" stroke-width="0.75"/><rect x="0.6" y="5.6" width="4.4" height="4.4" fill="#fff" stroke="#3C3C3C" stroke-width="0.75"/></svg>
<svg class="a" style="left:730px;top:456.5px;" width="10" height="11" viewBox="0 0 10 11"><path d="M2.6 0.8 H9 V7 H2.6 Z" fill="#fff" stroke="#3C3C3C" stroke-width="0.75"/><path d="M2.6 7 L0.8 9.6 M4.4 7 V10 M4.4 8.4 H6.6" stroke="#2B2B2B" stroke-width="0.8" fill="none"/><circle cx="1.4" cy="9.6" r="0.9" fill="#2D5FA8"/></svg>
<svg class="a" style="left:730px;top:471.5px;" width="10" height="10" viewBox="0 0 10 10"><path d="M1.6 1 L3.2 2.6 M1.2 3 H3.4 V0.8" fill="none" stroke="#8A7A2A" stroke-width="0.9"/><path d="M3.4 4 V7.6 H6 M3.4 5.6 H6" fill="none" stroke="#777" stroke-width="0.7"/><rect x="6" y="4.6" width="3" height="2" fill="#D8A03A"/><rect x="6" y="7" width="3" height="2" fill="#D8A03A"/></svg>
<svg class="a" style="left:863.5px;top:281px;" width="9" height="14" viewBox="0 0 9 14"><path d="M0.8 0.8 V11 L3.2 8.8 L4.8 12.6 L6.4 12 L4.8 8.2 H8 Z" fill="#fff" stroke="#111" stroke-width="0.9" stroke-linejoin="round"/></svg>
</div>
</body></html>
